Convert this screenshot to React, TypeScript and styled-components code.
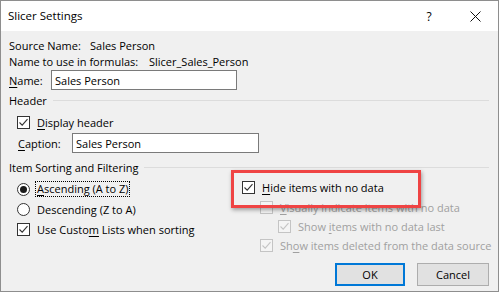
import React from "react";
import styled, { createGlobalStyle } from "styled-components";

const Global = createGlobalStyle`
  html, body { margin: 0; padding: 0; background: #ffffff; }
  body { font-family: "Open Sans", "Liberation Sans", Arial, sans-serif; font-size: 11px; color: #000; }
  * { box-sizing: border-box; }
`;

const Window = styled.div`
  width: 499px;
  height: 292px;
  border: 1px solid #8e8e8e;
  background: #f0f0f0;
  display: flex;
  flex-direction: column;
  overflow: hidden;
`;

const TitleBar = styled.div`
  height: 30px;
  background: #ffffff;
  display: flex;
  align-items: center;
  padding-left: 7px;
  flex-shrink: 0;
`;

const Title = styled.div`
  font-size: 11.5px;
  flex: 1;
  padding-bottom: 1px;
`;

const TitleButton = styled.div<{ $w: number }>`
  width: ${(p) => p.$w}px;
  height: 30px;
  display: flex;
  align-items: center;
  justify-content: center;
  font-size: 12px;
  color: #000;
`;

const Body = styled.div`
  flex: 1;
  padding: 6px 9px 0 7px;
  display: flex;
  flex-direction: column;
`;

const Row = styled.div<{ $h?: number; $mt?: number; $ml?: number }>`
  display: flex;
  align-items: center;
  height: ${(p) => p.$h ?? 16}px;
  margin-top: ${(p) => p.$mt ?? 0}px;
  margin-left: ${(p) => p.$ml ?? 0}px;
  white-space: nowrap;
`;

const Label = styled.span<{ $w?: number; $disabled?: boolean }>`
  display: inline-block;
  ${(p) => (p.$w ? `width: ${p.$w}px;` : "")}
  color: ${(p) => (p.$disabled ? "#a0a0a0" : "#000")};
`;

const Key = styled.span`
  text-decoration: underline;
  text-underline-offset: 2px;
`;

const TextInput = styled.div<{ $w: number }>`
  width: ${(p) => p.$w}px;
  height: 20px;
  background: #ffffff;
  border: 1px solid #7a7a7a;
  display: flex;
  align-items: center;
  padding-left: 3px;
`;

const GroupHeader = styled.div<{ $mt: number }>`
  display: flex;
  align-items: center;
  height: 16px;
  margin-top: ${(p) => p.$mt}px;
  &::after {
    content: "";
    flex: 1;
    height: 1px;
    background: #dcdcdc;
    margin-left: 6px;
    margin-right: 0px;
  }
`;

const Box = styled.span<{ $disabled?: boolean }>`
  width: 13px;
  height: 13px;
  flex-shrink: 0;
  border: 1px solid ${(p) => (p.$disabled ? "#c4c4c4" : "#333333")};
  background: ${(p) => (p.$disabled ? "#f4f4f4" : "#ffffff")};
  display: inline-flex;
  align-items: center;
  justify-content: center;
  margin-right: 7px;
`;

const Radio = styled.span<{ $on?: boolean }>`
  width: 13px;
  height: 13px;
  flex-shrink: 0;
  border-radius: 50%;
  border: 1px solid #333333;
  background: #ffffff;
  display: inline-flex;
  align-items: center;
  justify-content: center;
  margin-right: 7px;
  &::after {
    content: "";
    display: ${(p) => (p.$on ? "block" : "none")};
    width: 7px;
    height: 7px;
    border-radius: 50%;
    background: #1a1a1a;
  }
`;

const Focus = styled.span`
  outline: 1px dotted #000;
  outline-offset: 0px;
  padding: 0 1px;
  margin-left: -1px;
  line-height: 14px;
`;

const Lower = styled.div`
  display: grid;
  grid-template-columns: 234px 1fr;
`;

const Column = styled.div<{ $pt: number }>`
  display: flex;
  flex-direction: column;
  padding-top: ${(p) => p.$pt}px;
  position: relative;
`;

const Highlight = styled.div`
  position: absolute;
  left: -11px;
  top: -5px;
  width: 190px;
  height: 38px;
  border: 3px solid #ef4444;
  box-shadow: 1px 2px 4px rgba(0, 0, 0, 0.35);
  pointer-events: none;
`;

const Buttons = styled.div`
  display: flex;
  justify-content: flex-end;
  gap: 12px;
  margin-top: 8px;
`;

const Button = styled.div<{ $primary?: boolean; $w: number }>`
  width: ${(p) => p.$w}px;
  height: 23px;
  background: #e1e1e1;
  border: ${(p) => (p.$primary ? "2px solid #0078d7" : "1px solid #adadad")};
  display: flex;
  align-items: center;
  justify-content: center;
`;

const Check = ({ disabled }: { disabled?: boolean }) => (
  <svg width="11" height="11" viewBox="0 0 11 11">
    <path
      d="M1.5 5.5 L4.2 8.2 L9.5 2.2"
      fill="none"
      stroke={disabled ? "#c4c4c4" : "#333333"}
      strokeWidth="1.1"
    />
  </svg>
);

const CheckBox = ({ checked, disabled }: { checked?: boolean; disabled?: boolean }) => (
  <Box $disabled={disabled}>{checked && <Check disabled={disabled} />}</Box>
);

export default function App() {
  return (
    <>
      <Global />
      <Window>
        <TitleBar>
          <Title>Slicer Settings</Title>
          <TitleButton $w={46}>?</TitleButton>
          <TitleButton $w={46}>
            <svg width="11" height="11" viewBox="0 0 11 11">
              <path d="M0.5 0.5 L10.5 10.5 M10.5 0.5 L0.5 10.5" stroke="#111" strokeWidth="1" />
            </svg>
          </TitleButton>
        </TitleBar>
        <Body>
          <Row $ml={1}>
            <Label $w={81}>Source Name:</Label>
            <Label>Sales Person</Label>
          </Row>
          <Row $ml={1}>
            <Label $w={140}>Name to use in formulas:</Label>
            <Label>Slicer_Sales_Person</Label>
          </Row>
          <Row $h={20} $mt={1} $ml={1}>
            <Label $w={42}>
              <Key>N</Key>ame:
            </Label>
            <TextInput $w={186}>Sales Person</TextInput>
          </Row>
          <GroupHeader $mt={2}>
            <Label style={{ marginLeft: 1 }}>Header</Label>
          </GroupHeader>
          <Row $mt={6} $ml={9}>
            <CheckBox checked />
            <Label>
              <Key>D</Key>isplay header
            </Label>
          </Row>
          <Row $h={20} $mt={3} $ml={10}>
            <Label $w={54}>
              <Key>C</Key>aption:
            </Label>
            <TextInput $w={187}>Sales Person</TextInput>
          </Row>
          <GroupHeader $mt={6}>
            <Label style={{ marginLeft: 1 }}>Item Sorting and Filtering</Label>
          </GroupHeader>
          <Lower>
            <Column $pt={4} style={{ paddingLeft: 9 }}>
              <Row $h={20}>
                <Radio $on />
                <Focus>
                  <Key>A</Key>scending (A to Z)
                </Focus>
              </Row>
              <Row $h={20}>
                <Radio />
                <Label>
                  Descendin<Key>g</Key> (Z to A)
                </Label>
              </Row>
              <Row $h={20}>
                <CheckBox checked />
                <Label>
                  Use Custo<Key>m</Key> Lists when sorting
                </Label>
              </Row>
            </Column>
            <Column $pt={2}>
              <Highlight />
              <Row $h={21}>
                <CheckBox checked />
                <Label>
                  <Key>H</Key>ide items with no data
                </Label>
              </Row>
              <Row $h={19} $ml={18}>
                <CheckBox disabled />
                <Label $disabled>
                  <Key>V</Key>isually indicate items with no data
                </Label>
              </Row>
              <Row $h={19} $ml={36}>
                <CheckBox checked disabled />
                <Label $disabled>
                  Show <Key>i</Key>tems with no data last
                </Label>
              </Row>
              <Row $h={19} $ml={18}>
                <CheckBox checked disabled />
                <Label $disabled>
                  Sh<Key>o</Key>w items deleted from the data source
                </Label>
              </Row>
            </Column>
          </Lower>
          <Buttons>
            <Button $primary $w={70}>OK</Button>
            <Button $w={72}>Cancel</Button>
          </Buttons>
        </Body>
      </Window>
    </>
  );
}
